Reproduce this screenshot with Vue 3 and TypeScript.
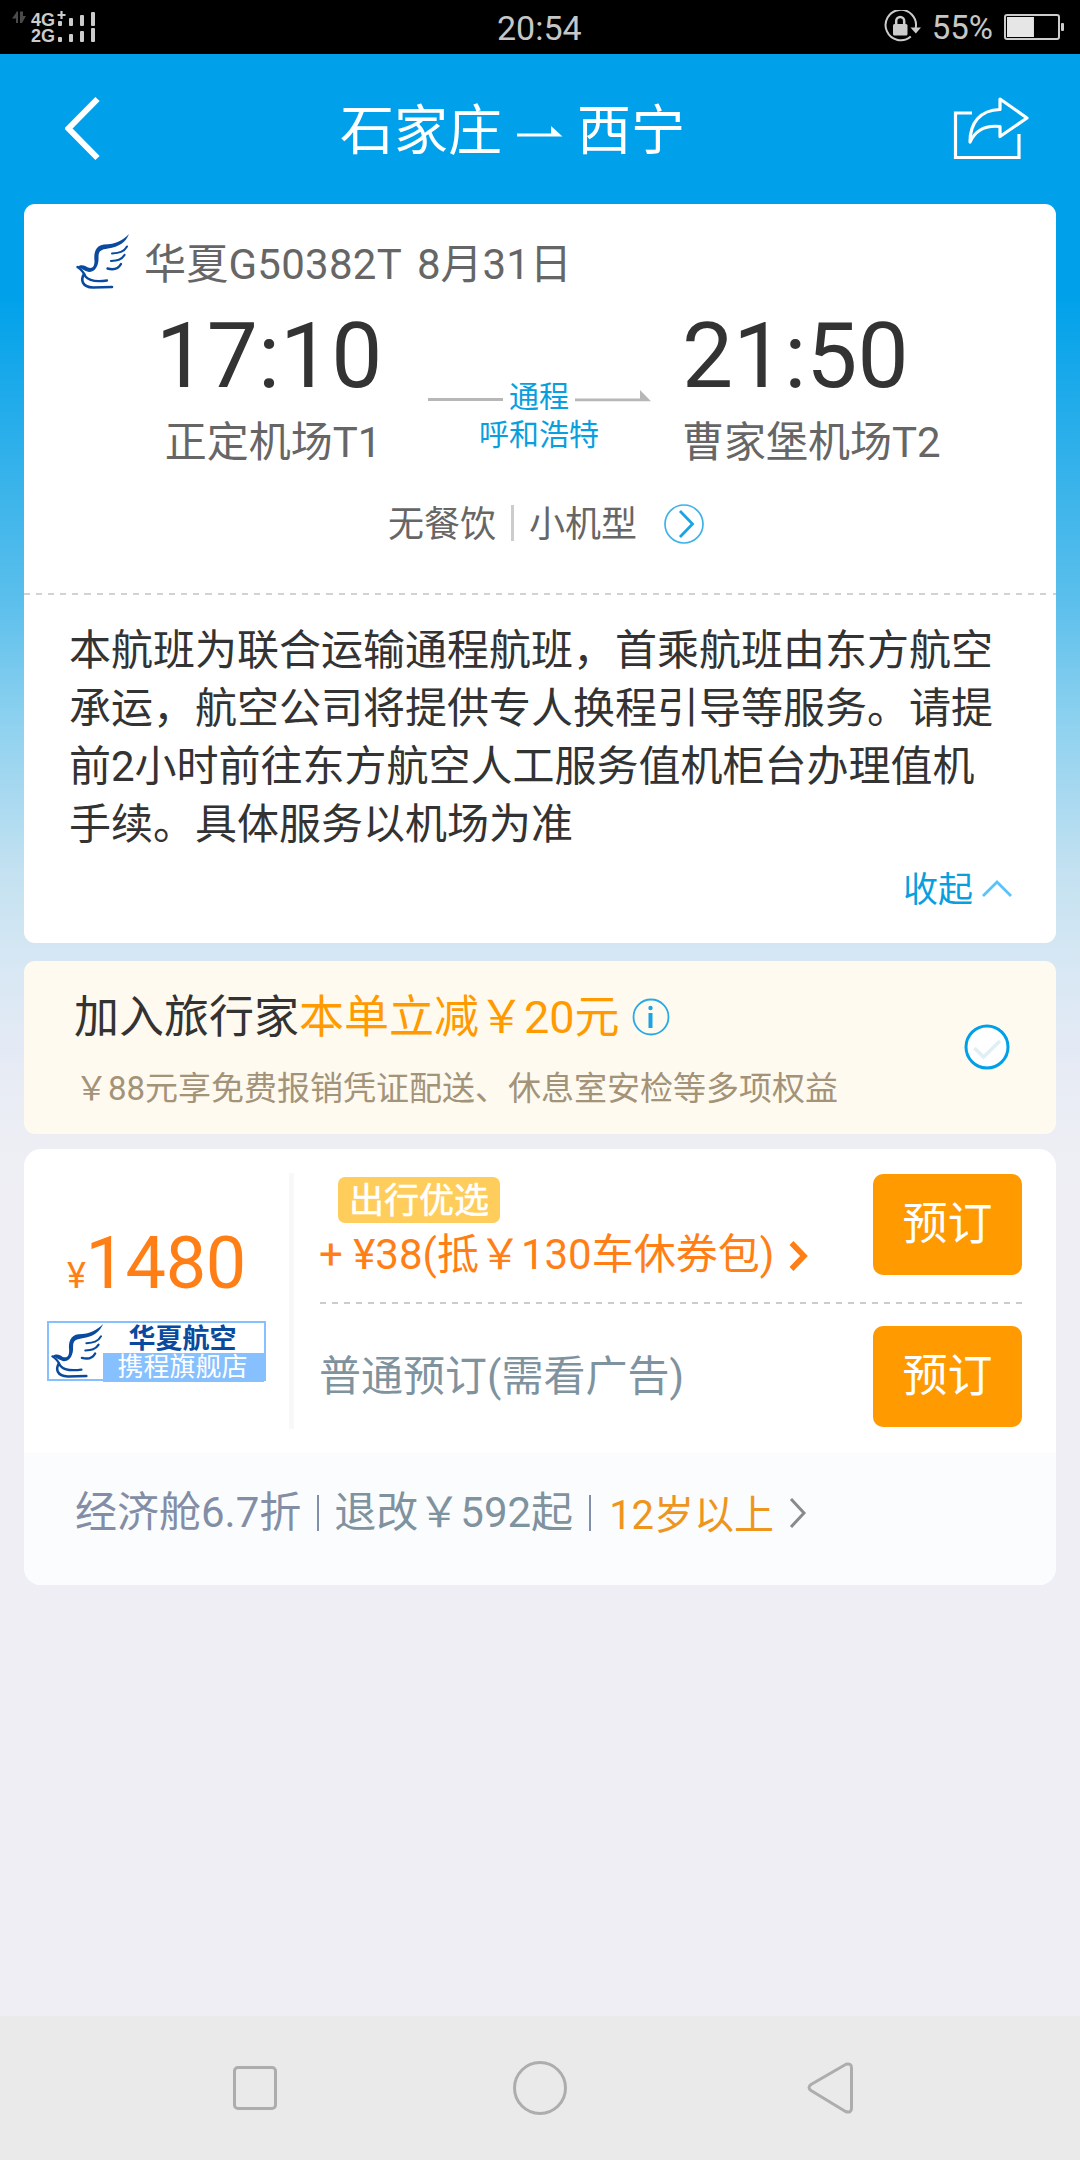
<script setup lang="ts">
interface Stop {
  time: string
  airport: string
}

const departure: Stop = { time: '17:10', airport: '正定机场T1' }
const arrival: Stop = { time: '21:50', airport: '曹家堡机场T2' }
const notice: string =
  '本航班为联合运输通程航班，首乘航班由东方航空承运，航空公司将提供专人换程引导等服务。请提前2小时前往东方航空人工服务值机柜台办理值机手续。具体服务以机场为准'
const batteryLevel = 55
const signalRows: string[] = ['4G', '2G']
</script>

<template>
  <div class="screen">
    <div class="status">
      <svg class="signal" width="90" height="36" viewBox="0 0 90 36">
        <path d="M4.500 0.500H6V12H4V7.500H0L4 2zM8 0.500H11V5H14L10 12H8z" fill="#4a4a4a" />
        <text v-for="(label, i) in signalRows" :key="label" x="19" :y="14.800 + i * 16.200" class="net">{{ label }}</text>
        <path d="M45.500 4h8M49.500 0v8" stroke="#ccc" stroke-width="2.200" />
        <g v-for="row in 2" :key="row" fill="#ccc">
          <rect v-for="(h, c) in [5, 8, 11, 14]" :key="c" :x="46 + c * 11" :y="15 + (row - 1) * 16 - h" width="4" :height="h" rx="1" />
        </g>
      </svg>
      <span class="clock">20:54</span>
      <div class="status-right">
        <svg width="38" height="34" viewBox="0 0 38 34" fill="none">
          <path d="M27.800 26.500A15.200 15.200 0 1 1 32.700 18" stroke="#ccc" stroke-width="2" />
          <path d="M27.500 17.500h10.500l-5.200 6z" fill="#ccc" />
          <rect x="10" y="14" width="14.500" height="11.500" rx="1.500" fill="#ccc" />
          <path d="M13.200 15v-4a4 4 0 0 1 8 0V15" stroke="#ccc" stroke-width="2.500" />
        </svg>
        <span class="percent">{{ batteryLevel }}%</span>
        <svg width="61" height="26" viewBox="0 0 61 26" fill="none">
          <rect x="1" y="1" width="54" height="24" rx="2" stroke="#ccc" stroke-width="2" />
          <rect x="3" y="3" :width="batteryLevel * 0.49" height="20" fill="#e6e6e6" />
          <rect x="57" y="9" width="3" height="8" rx="1" fill="#ccc" />
        </svg>
      </div>
    </div>

    <header class="header">
      <svg class="back" width="36" height="66" viewBox="0 0 36 66" fill="none">
        <path d="M32.500 3L3.500 32.500L32.500 62" stroke="#fff" stroke-width="6" />
      </svg>
      <div class="title">
        <span>石家庄</span>
        <svg width="46" height="14" viewBox="0 0 46 14">
          <path d="M0 8.500H34V1L45.500 11.500H0z" fill="#fff" />
        </svg>
        <span>西宁</span>
      </div>
      <svg class="share" width="78" height="66" viewBox="0 0 78 66" fill="none" stroke="#fff" stroke-width="3.200">
        <path d="M19 17H2.500V61.500H66V38" />
        <path d="M47 3L74 22L47 40.500V30.500C33 29 23 33 17 46C17 27 27 14 47 13.500z" stroke-linejoin="round" />
      </svg>
    </header>

    <main class="content">
      <section class="card flight">
        <div class="flight-no">
          <svg class="bird" width="54" height="55" viewBox="0 0 54 55">
            <use href="#bird-shape" />
          </svg>
          <span class="code">华夏G50382T</span>
          <span class="date">8月31日</span>
        </div>

        <div class="route">
          <div class="stop from">
            <div class="time">{{ departure.time }}</div>
            <div class="airport">{{ departure.airport }}</div>
          </div>
          <div class="via">
            <div class="via-line">
              <i class="rule"></i>
              <span>通程</span>
              <svg width="76" height="12" viewBox="0 0 76 12">
                <path d="M0 8.600H65V0L76 11.300H0z" fill="#b7b7b7" />
              </svg>
            </div>
            <div>呼和浩特</div>
          </div>
          <div class="stop to">
            <div class="time">{{ arrival.time }}</div>
            <div class="airport">{{ arrival.airport }}</div>
          </div>
        </div>

        <div class="meta">
          <span>无餐饮</span>
          <i class="sep"></i>
          <span>小机型</span>
          <svg class="more" width="40" height="40" viewBox="0 0 40 40" fill="none">
            <circle cx="20" cy="20" r="19" stroke="#3fb2e8" stroke-width="1.700" />
            <path d="M16 7L28.500 20L16 33" stroke="#1ba3e3" stroke-width="2.800" />
          </svg>
        </div>

        <div class="dashes"></div>
        <p class="notice">{{ notice }}</p>
        <div class="fold">
          <span>收起</span>
          <svg width="30" height="18" viewBox="0 0 30 18" fill="none">
            <path d="M1 16L15 2L29 16" stroke="#58c2fa" stroke-width="2.800" />
          </svg>
        </div>
      </section>

      <section class="card member">
        <div>
          <div class="member-title">
            <span>加入旅行家</span><span class="hot">本单立减￥20元</span>
            <svg width="38" height="38" viewBox="0 0 38 38" fill="none">
              <circle cx="19" cy="19" r="17.500" stroke="#28aae7" stroke-width="1.800" />
              <circle cx="18.500" cy="10" r="2.200" fill="#1ba3e3" />
              <path d="M18.500 15V30" stroke="#1ba3e3" stroke-width="4" />
            </svg>
          </div>
          <div class="member-sub">￥88元享免费报销凭证配送、休息室安检等多项权益</div>
        </div>
        <svg class="check" width="46" height="46" viewBox="0 0 46 46">
          <circle cx="23" cy="23" r="21" fill="#fff" stroke="#00a0e9" stroke-width="3" />
          <path d="M10.500 24L19.500 33L36 17" fill="none" stroke="#e1eef3" stroke-width="3.500" />
        </svg>
      </section>

      <section class="card fare">
        <div class="fare-main">
          <div class="price-col">
            <div class="price"><small>¥</small>1480</div>
            <div class="store">
              <svg class="store-bird" width="53" height="56" viewBox="0 0 54 55">
                <g id="bird-shape">
                  <path
                    d="M53 0C50 8 43 13 32 14.500C25 15.500 22.500 17 22.500 23C23 32 19 38 13 38C8 37 5 33 0.500 33.500C5 29.500 9 31.500 12 33.500C17 35 18.500 32 18.500 27C17.500 18 20 11.500 28 10.500C40 10.500 47 6 53 0z"
                    fill="#0a4a9e"
                  />
                  <g fill="none" stroke="#0a4a9e" stroke-linecap="round">
                    <path d="M1.500 33C6 36 8 39 9.500 42.500C13 47 20 48 31 46.500" stroke-width="2.300" />
                    <path d="M8 40C4.500 46 6 53 17 53.500L36 53" stroke-width="2.600" />
                    <path d="M51 12.500C48 18 43 19 36 19.500" stroke-width="2" />
                    <path d="M48.500 21C45.500 26 41 26.500 35 27" stroke-width="2.200" />
                    <path d="M45 30C42 35.500 37 36 31.500 34.500" stroke-width="2.400" />
                  </g>
                </g>
              </svg>
              <div class="store-names">
                <div class="airline">华夏航空</div>
                <div class="shop">携程旗舰店</div>
              </div>
            </div>
          </div>
          <i class="divider"></i>
          <div class="options">
            <div class="option first">
              <div>
                <span class="tag">出行优选</span>
                <div class="bundle">
                  <span>+ ¥38(抵￥130车休券包)</span>
                  <svg width="19" height="32" viewBox="0 0 19 32" fill="none">
                    <path d="M2.500 3L15 16L2.500 29" stroke="#ff7e15" stroke-width="5.500" />
                  </svg>
                </div>
              </div>
              <button class="book">预订</button>
            </div>
            <div class="dashes bold"></div>
            <div class="option second">
              <span class="plain">普通预订(需看广告)</span>
              <button class="book">预订</button>
            </div>
          </div>
        </div>
        <div class="fare-rules">
          <span class="cabin">经济舱6.7折</span>
          <i class="bar"></i>
          <span class="refund">退改￥592起</span>
          <i class="bar"></i>
          <span class="age">12岁以上</span>
          <svg width="18" height="32" viewBox="0 0 18 32" fill="none">
            <path d="M2 2L15 16L2 30" stroke="#8a8a8a" stroke-width="3" />
          </svg>
        </div>
      </section>
    </main>

    <nav class="nav">
      <svg width="46" height="56" viewBox="0 0 46 56" fill="none">
        <rect x="2.500" y="7.500" width="41" height="41" rx="3.500" stroke="#adadad" stroke-width="3" />
      </svg>
      <svg class="home" width="56" height="56" viewBox="0 0 56 56" fill="none">
        <circle cx="28" cy="28" r="25.500" stroke="#adadad" stroke-width="3" />
      </svg>
      <svg width="48" height="56" viewBox="0 0 48 56" fill="none">
        <path
          d="M40 4.300L5 24.500Q1 27.500 5 30.500L39.500 51.500Q45.500 53.500 45.500 48V8Q45.500 3 40 4.300z"
          stroke="#adadad"
          stroke-width="3"
          stroke-linejoin="round"
        />
      </svg>
    </nav>
  </div>
</template>

<style>
body {
  background: #efeef4;
}
</style>

<style scoped>
.screen {
  width: 1080px;
  height: 2160px;
  display: flex;
  flex-direction: column;
  overflow: hidden;
  font-family: Roboto, 'Noto Sans CJK SC', sans-serif;
  font-kerning: none;
  color: #333;
  background: linear-gradient(
    #00a1ea 0,
    #00a1ea 295px,
    #2cafea 440px,
    #5bbfec 600px,
    #8dd1ef 720px,
    #c3e1f1 870px,
    #d5e7f3 955px,
    #e4eaf5 1050px,
    #edeef4 1140px,
    #efeef4 1250px
  );
}

svg {
  display: block;
  flex: none;
}

i {
  display: block;
  flex: none;
}

.status {
  flex: none;
  height: 54px;
  background: #000;
  color: #c6c6c6;
  display: grid;
  grid-template-columns: 497px 1fr auto;
  align-items: start;
}

.signal {
  margin: 11px 0 0 12px;
  overflow: visible;
}

.net {
  font: 700 18px/1 'Liberation Sans', sans-serif;
  fill: #ccc;
}

.clock {
  font-size: 34px;
  line-height: 57px;
}

.status-right {
  display: flex;
  margin-top: 10px;
  padding-right: 15px;
}

.percent {
  font-size: 33px;
  line-height: 36px;
  margin: 0 11px 0 11px;
}

.status-right svg:last-child {
  margin-top: 4px;
}

.header {
  flex: none;
  height: 150px;
  display: flex;
  align-items: flex-start;
  color: #fff;
}

.back {
  margin: 42px 0 0 65px;
}

.title {
  display: flex;
  align-items: center;
  margin: 47px auto 0 239px;
  font-size: 54px;
  line-height: 62px;
}

.title svg {
  margin: 0 14px 0 15px;
}

.share {
  margin: 42px 49px 0 0;
}

.content {
  flex: 1;
  padding: 0 24px;
}

.card {
  background: #fff;
  border-radius: 11px;
  overflow: hidden;
}

.flight {
  height: 709px;
  padding-top: 30px;
}

.flight-no {
  display: flex;
  align-items: flex-start;
  padding-left: 52px;
  font-size: 42px;
  line-height: 61px;
  color: #666;
}

.code {
  margin-left: 14px;
  letter-spacing: 0.25px;
}

.date {
  margin-left: 15px;
}

.route {
  display: flex;
  margin-top: 11px;
}

.time {
  font-size: 91px;
  line-height: 100px;
}

.airport {
  margin-top: 7px;
  font-size: 42px;
  line-height: 60px;
  color: #666;
}

.from {
  margin-left: 94px;
  width: 306px;
  text-align: center;
}

.from .time {
  padding-right: 4px;
}

.from .airport {
  padding-left: 4px;
}

.via {
  width: 230px;
  padding-top: 72px;
  text-align: center;
  font-size: 30px;
  line-height: 37.5px;
  color: #099fde;
}

.via-line {
  display: flex;
  align-items: center;
  padding-left: 4px;
}

.via-line .rule {
  width: 75px;
  height: 3px;
  margin: 6px 6px 0 0;
  background: #b7b7b7;
}

.via-line svg {
  margin: -2px 0 0 6px;
}

.to {
  margin-left: 28px;
}

.meta {
  display: flex;
  align-items: center;
  height: 44px;
  margin: 30px 0 0 364px;
  font-size: 36px;
  line-height: 44px;
  color: #666;
}

.sep {
  width: 3px;
  height: 36px;
  margin: -4px 15px 0 15px;
  background: #ccc;
}

.more {
  margin: -3px 0 0 27px;
}

.dashes {
  height: 2px;
  margin-top: 46px;
  background: repeating-linear-gradient(90deg, #d2d2d2 0 6px, transparent 6px 12.100px);
}

.notice {
  width: 930px;
  margin: 27px 0 0 45px;
  font-size: 42px;
  line-height: 58px;
}

.fold {
  display: flex;
  justify-content: flex-end;
  align-items: center;
  height: 44px;
  margin: 15px 44px 0 0;
  font-size: 35px;
  line-height: 44px;
  color: #099fde;
}

.fold svg {
  margin: -4px 0 0 9px;
}

.member {
  height: 173px;
  box-sizing: border-box;
  margin-top: 18px;
  padding: 6px 46px 0 50px;
  display: flex;
  justify-content: space-between;
  align-items: center;
  background: #fffaef;
}

.member-title {
  display: flex;
  align-items: center;
  font-size: 45px;
  line-height: 56px;
}

.hot {
  color: #ff9a00;
}

.member-title svg {
  margin: -2px 0 0 12px;
}

.member-sub {
  margin-top: 21px;
  padding-left: 1px;
  font-size: 33px;
  line-height: 44px;
  color: #a39379;
}

.check {
  margin-top: -7px;
}

.fare {
  height: 436px;
  margin-top: 15px;
  border-radius: 17px;
}

.fare-main {
  display: flex;
  height: 304px;
}

.price-col {
  width: 265px;
  padding-top: 74px;
}

.price {
  height: 80px;
  padding-left: 43px;
  font-size: 72px;
  line-height: 81px;
  letter-spacing: -0.4px;
  color: #ff7e15;
}

.price small {
  font-size: 36px;
  line-height: 1;
}

.store {
  display: flex;
  width: 219px;
  height: 60px;
  margin: 18px 0 0 23px;
  border: 2px solid #86c0ff;
  box-sizing: border-box;
}

.store-bird {
  margin-right: -1px;
  padding: 0 0 0 2px;
}

.store-names {
  flex: 1;
  display: flex;
  flex-direction: column;
}

.airline {
  height: 30px;
  padding-right: 2px;
  text-align: center;
  font-size: 27px;
  font-weight: 700;
  line-height: 32px;
  color: #0a4a9e;
}

.shop {
  flex: 1;
  padding-right: 2px;
  text-align: center;
  font-size: 26px;
  line-height: 29px;
  color: #fff;
  background: #86c0ff;
}

.divider {
  width: 5px;
  height: 256px;
  margin-top: 24px;
  background: #f8f8f8;
}

.options {
  width: 702px;
  margin-left: 26px;
}

.option {
  display: flex;
  justify-content: space-between;
}

.first {
  height: 128px;
  padding-top: 25px;
}

.second {
  height: 101px;
  padding-top: 22px;
  align-items: center;
}

.tag {
  display: block;
  width: 162px;
  height: 46px;
  margin: 3px 0 0 18px;
  border-radius: 7px;
  font-size: 35px;
  line-height: 49px;
  text-align: center;
  color: #fff;
  -webkit-text-stroke: 0.6px #fff;
  background: #ffcd5c;
}

.bundle {
  display: flex;
  align-items: center;
  margin: 4px 0 0 -1px;
  font-size: 42px;
  line-height: 56px;
  color: #ff7e15;
}

.bundle svg {
  margin: 1px 0 0 15px;
}

.dashes.bold {
  margin-top: 0;
  background: repeating-linear-gradient(90deg, #ccc 0 6px, transparent 6px 12px);
}

.plain {
  margin-left: -1px;
  font-size: 42px;
  line-height: 56px;
  color: #7f939f;
}

.book {
  width: 149px;
  height: 101px;
  padding: 0;
  border: 0;
  border-radius: 10px;
  font: 45px/101px Roboto, 'Noto Sans CJK SC', sans-serif;
  color: #fff;
  background: #ff9a00;
}

.fare-rules {
  display: flex;
  align-items: center;
  height: 132px;
  box-sizing: border-box;
  padding: 0 0 13px 51px;
  font-size: 42px;
  line-height: 56px;
  background: #fbfcfe;
}

.cabin {
  color: #838ea6;
}

.bar {
  width: 2px;
  height: 36px;
  margin: 0 15px 0 16px;
  background: #8190a8;
}

.refund {
  color: #7f939f;
}

.age {
  margin: 6px 0 0 3px;
  font-size: 40px;
  color: #ee951d;
}

.fare-rules svg {
  margin: 1px 0 0 15px;
}

.nav {
  flex: none;
  height: 144px;
  display: flex;
  justify-content: space-between;
  align-items: center;
  padding: 0 226px 0 232px;
  box-sizing: border-box;
  background: #eaeaea;
}

.home {
  margin-right: 4px;
}
</style>
